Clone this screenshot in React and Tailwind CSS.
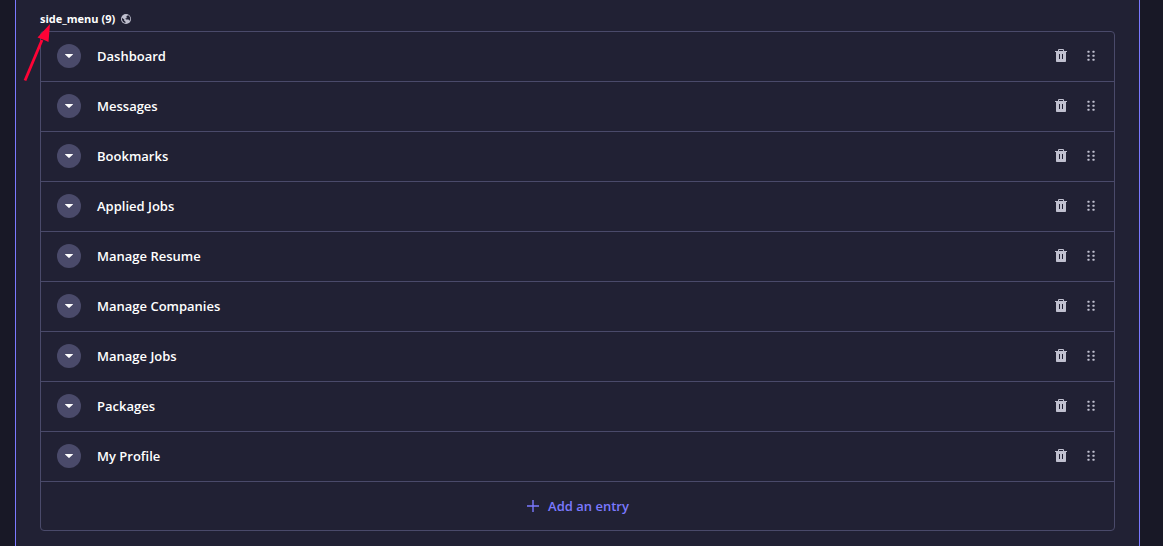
import React from "react";

const entries = [
  "Dashboard",
  "Messages",
  "Bookmarks",
  "Applied Jobs",
  "Manage Resume",
  "Manage Companies",
  "Manage Jobs",
  "Packages",
  "My Profile",
];

function GlobeIcon() {
  return (
    <svg width="12" height="12" viewBox="0 0 12 12" className="text-[#c0c0cf]" aria-hidden="true">
      <circle cx="6" cy="6" r="5" fill="currentColor" />
      <path
        d="M1.900 4.700 4.200 6.600v1.200l1.300 1v1.300C3.300 9.800 1.600 7.600 1.900 4.700zM6.200 3.200l2-.9c1.500.9 2.200 2.400 2 4.300L9.300 7.800 8.600 6.500H6.200L5 5.600h1.300V4.500h1.100z"
        fill="#212134"
      />
    </svg>
  );
}

function CaretIcon() {
  return (
    <svg width="8" height="4" viewBox="0 0 8 4" fill="currentColor" aria-hidden="true">
      <path d="M0.300 0h7.400c.3 0 .4.3.2.5L4.400 3.800a.5.5 0 0 1-.8 0L.1.5C-.1.3 0 0 .3 0z" />
    </svg>
  );
}

function TrashIcon() {
  return (
    <svg width="12" height="14" viewBox="0 0 12 14" fill="currentColor" aria-hidden="true">
      <path
        fillRule="evenodd"
        d="M3 2V1a1 1 0 0 1 1-1h4a1 1 0 0 1 1 1v1h3v1h-1v9.200a.8.8 0 0 1-.8.8H1.800a.8.8 0 0 1-.8-.8V3H0V2zM4 1v1h4V1zM4 5v5h1V5zM7 5v5h1V5z"
      />
    </svg>
  );
}

function DragIcon() {
  return (
    <svg width="8" height="12" viewBox="0 0 8 12" fill="currentColor" aria-hidden="true">
      {[1, 5, 9].map((y) => (
        <React.Fragment key={y}>
          <rect x="0.5" y={y - 0.3} width="2" height="2" rx="0.5" />
          <rect x="5.5" y={y - 0.3} width="2" height="2" rx="0.5" />
        </React.Fragment>
      ))}
    </svg>
  );
}

function Entry({ name }) {
  return (
    <li className="flex h-[50px] items-center border-b border-[#4a4a6a] pb-px pl-4 pr-[9px]">
      <button
        type="button"
        aria-label={"Expand " + name}
        className="flex size-6 shrink-0 items-center justify-center rounded-full bg-[#4a4a6a] text-white"
      >
        <CaretIcon />
      </button>
      <span className="ml-4 flex-1 text-[13px] leading-5 font-semibold text-white">{name}</span>
      <div className="flex items-center gap-1 text-[#c0c0cf]">
        <button type="button" aria-label={"Delete " + name} className="flex h-7 w-6 items-center justify-center">
          <TrashIcon />
        </button>
        <button type="button" aria-label={"Drag " + name} className="flex h-7 w-7 items-center justify-center">
          <DragIcon />
        </button>
      </div>
    </li>
  );
}

export default function App() {
  return (
    <div className="flex min-h-screen bg-[#181826] pl-[15px] pr-[23px] font-['Open_Sans','Noto_Sans',sans-serif]">
      <main className="relative flex-1 border-x border-[#7b79ff] bg-[#212134] px-6 pt-[11px] pb-[15px]">
        <h2 className="flex h-4 items-center gap-[5px] text-[11px] font-bold text-white">
          side_menu (9)
          <GlobeIcon />
        </h2>
        <section className="mt-1 rounded-sm border border-[#4a4a6a]">
          <ul>
            {entries.map((name) => (
              <Entry key={name} name={name} />
            ))}
          </ul>
          <button
            type="button"
            className="flex h-12 w-full items-center justify-center gap-2 text-[13px] leading-5 font-semibold text-[#7b79ff]"
          >
            <svg width="14" height="14" viewBox="0 0 14 14" fill="currentColor" aria-hidden="true">
              <path d="M6.300 1h1.400v5.300H13v1.400H7.700V13H6.300V7.700H1V6.300h5.300z" />
            </svg>
            Add an entry
          </button>
        </section>
        <svg
          className="absolute left-[7px] top-[22px]"
          width="30"
          height="62"
          viewBox="0 0 30 62"
          aria-hidden="true"
        >
          <path d="M2 58.500 19 18" stroke="#ff0336" strokeWidth="2.800" fill="none" />
          <path d="M27 2 14.500 15.500 20 17.500 25.500 20z" fill="#ff0336" />
        </svg>
      </main>
    </div>
  );
}
